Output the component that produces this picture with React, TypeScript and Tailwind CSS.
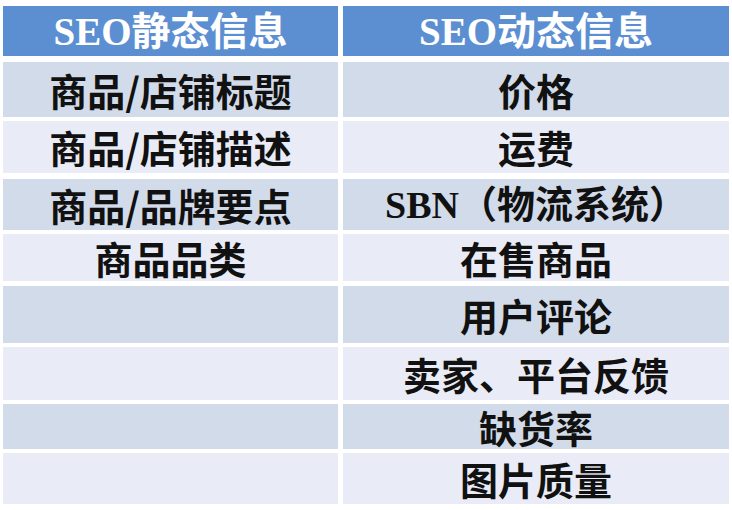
import React from "react";

const serifFont = "font-['Liberation_Serif','Noto_Sans_CJK_SC',serif]";
const sansFont = "font-['Noto_Sans_CJK_SC',sans-serif]";

interface Row {
  left: string;
  right: string;
  rowClass: string;
  bg: string;
  serifRight?: boolean;
}

// bands alternate darker / lighter, white gaps between them
const rows: Row[] = [
  { left: "商品/店铺标题", right: "价格", rowClass: "mt-[6px] h-[55px]", bg: "bg-[#d1dbea]" },
  { left: "商品/店铺描述", right: "运费", rowClass: "mt-[4px] h-[52px]", bg: "bg-[#e9ecf6]" },
  { left: "商品/品牌要点", right: "SBN（物流系统）", rowClass: "mt-[6px] h-[51px]", bg: "bg-[#d1dbea]", serifRight: true },
  { left: "商品品类", right: "在售商品", rowClass: "mt-[4px] h-[47px]", bg: "bg-[#e9ecf6]" },
  { left: "", right: "用户评论", rowClass: "mt-[5px] h-[57px]", bg: "bg-[#d1dbea]" },
  { left: "", right: "卖家、平台反馈", rowClass: "mt-[4px] h-[53px]", bg: "bg-[#e9ecf6]" },
  { left: "", right: "缺货率", rowClass: "mt-[4px] h-[45px]", bg: "bg-[#d1dbea]" },
  { left: "", right: "图片质量", rowClass: "mt-[4px] h-[51px]", bg: "bg-[#e9ecf6]" },
];

export default function App() {
  return (
    <div className="w-[732px] h-[510px] bg-white pt-[6px] pl-[3px] overflow-hidden">
      {/* Header */}
      <div className="flex gap-x-[5px] h-[50px]">
        <div
          className={`w-[335px] bg-[#5c8fd2] flex items-center justify-center text-white text-[39px] font-bold leading-none ${serifFont}`}
        >
          SEO静态信息
        </div>
        <div
          className={`w-[386px] bg-[#5c8fd2] flex items-center justify-center text-white text-[39px] font-bold leading-none ${serifFont}`}
        >
          SEO动态信息
        </div>
      </div>

      {rows.map((row, i) => (
        <div key={i} className={`flex gap-x-[5px] ${row.rowClass}`}>
          <div
            className={`w-[335px] ${row.bg} flex items-center justify-center text-[#111] text-[38px] font-bold leading-none ${sansFont}`}
          >
            {row.left}
          </div>
          <div
            className={`w-[386px] ${row.bg} flex items-center justify-center text-[#111] text-[38px] font-bold leading-none ${
              row.serifRight ? serifFont : sansFont
            }`}
          >
            {row.right}
          </div>
        </div>
      ))}
    </div>
  );
}
